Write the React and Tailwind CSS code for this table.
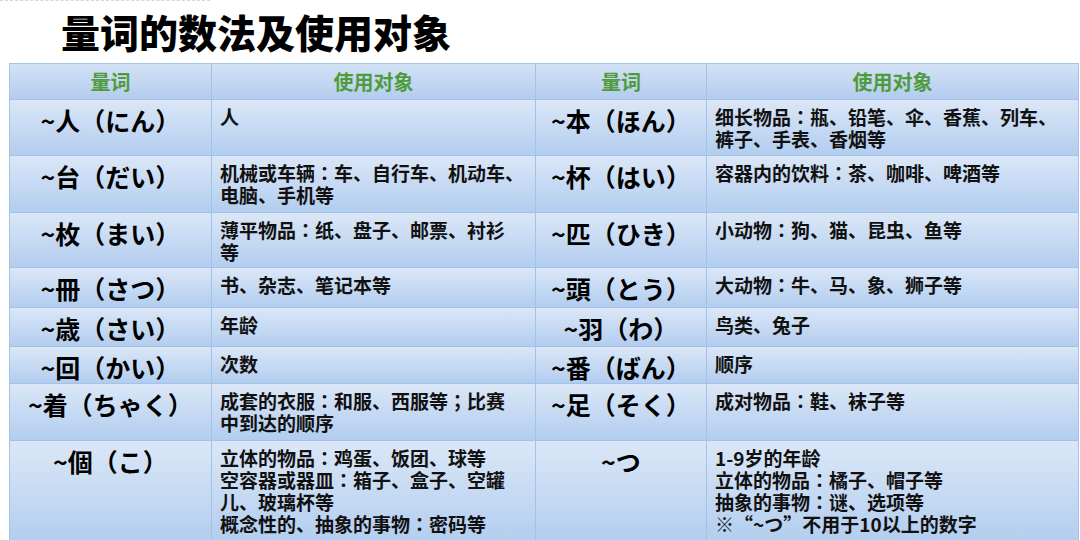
const rows = [
  { h: "h-[56px]", a: "~人（にん）", au: ["人"], b: "~本（ほん）", bu: ["细长物品：瓶、铅笔、伞、香蕉、列车、", "裤子、手表、香烟等"] },
  { h: "h-[57px]", a: "~台（だい）", au: ["机械或车辆：车、自行车、机动车、", "电脑、手机等"], b: "~杯（はい）", bu: ["容器内的饮料：茶、咖啡、啤酒等"] },
  { h: "h-[55px]", a: "~枚（まい）", au: ["薄平物品：纸、盘子、邮票、衬衫", "等"], b: "~匹（ひき）", bu: ["小动物：狗、猫、昆虫、鱼等"] },
  { h: "h-[40px]", a: "~冊（さつ）", au: ["书、杂志、笔记本等"], b: "~頭（とう）", bu: ["大动物：牛、马、象、狮子等"] },
  { h: "h-[39px]", a: "~歳（さい）", au: ["年龄"], b: "~羽（わ）", bu: ["鸟类、兔子"] },
  { h: "h-[37px]", a: "~回（かい）", au: ["次数"], b: "~番（ばん）", bu: ["顺序"] },
  { h: "h-[57px]", a: "~着（ちゃく）", au: ["成套的衣服：和服、西服等；比赛", "中到达的顺序"], b: "~足（そく）", bu: ["成对物品：鞋、袜子等"] },
  {
    h: "h-[104px]",
    a: "~個（こ）",
    au: ["立体的物品：鸡蛋、饭团、球等", "空容器或器皿：箱子、盒子、空罐", "儿、玻璃杯等", "概念性的、抽象的事物：密码等"],
    b: "~つ",
    bu: ["1-9岁的年龄", "立体的物品：橘子、帽子等", "抽象的事物：谜、选项等", "※“~つ”不用于10以上的数字"],
  },
]

// colon / semicolon are centred in the original, as in the JP font
function Line({ text }) {
  const parts = text.split(/([：；])/)
  return (
    <div className="whitespace-nowrap">
      {parts.map((p, i) =>
        p === "：" || p === "；" ? (
          <span key={i} className="font-['Noto_Sans_CJK_JP',sans-serif]">{p}</span>
        ) : (
          p
        )
      )}
    </div>
  )
}

function Counter({ text }) {
  return (
    <div className="border-r border-b border-[#a3c2e8] bg-linear-to-b from-[#dbe7f7] to-[#b2cdef] pt-[5px] text-center text-[25px] font-bold leading-[30px] text-black">
      {text}
    </div>
  )
}

function Usage({ lines }) {
  return (
    <div className="border-r border-b border-[#a3c2e8] bg-linear-to-b from-[#dbe7f7] to-[#b2cdef] pt-[6px] pl-[8px] text-[19px] font-bold leading-[22px] text-[#111]">
      {lines.map((l, i) => (
        <Line key={i} text={l} />
      ))}
    </div>
  )
}

export default function App() {
  return (
    <div className="h-[540px] w-[1080px] overflow-hidden bg-white font-['Noto_Sans_CJK_SC',sans-serif]">
      <div className="w-[210px] border-t border-dashed border-gray-300" />
      <div className="flex h-[62px] items-center pl-[61px] pb-[2px]">
        <h1 className="text-[39px] font-black leading-none text-black">量词的数法及使用对象</h1>
      </div>
      <div className="ml-[9px] w-[1070px] border-t border-l border-[#a3c2e8]">
        <div className="grid h-[36px] grid-cols-[202px_324px_171px_372px] text-[20px] font-bold text-[#4f9a3b]">
          {["量词", "使用对象", "量词", "使用对象"].map((t, i) => (
            <div key={i} className="flex items-center justify-center border-r border-b border-[#a3c2e8] bg-linear-to-b from-[#d3e3f6] to-[#b3ccee]">
              {t}
            </div>
          ))}
        </div>
        {rows.map((r, i) => (
          <div key={i} className={`grid grid-cols-[202px_324px_171px_372px] ${r.h}`}>
            <Counter text={r.a} />
            <Usage lines={r.au} />
            <Counter text={r.b} />
            <Usage lines={r.bu} />
          </div>
        ))}
      </div>
    </div>
  )
}
